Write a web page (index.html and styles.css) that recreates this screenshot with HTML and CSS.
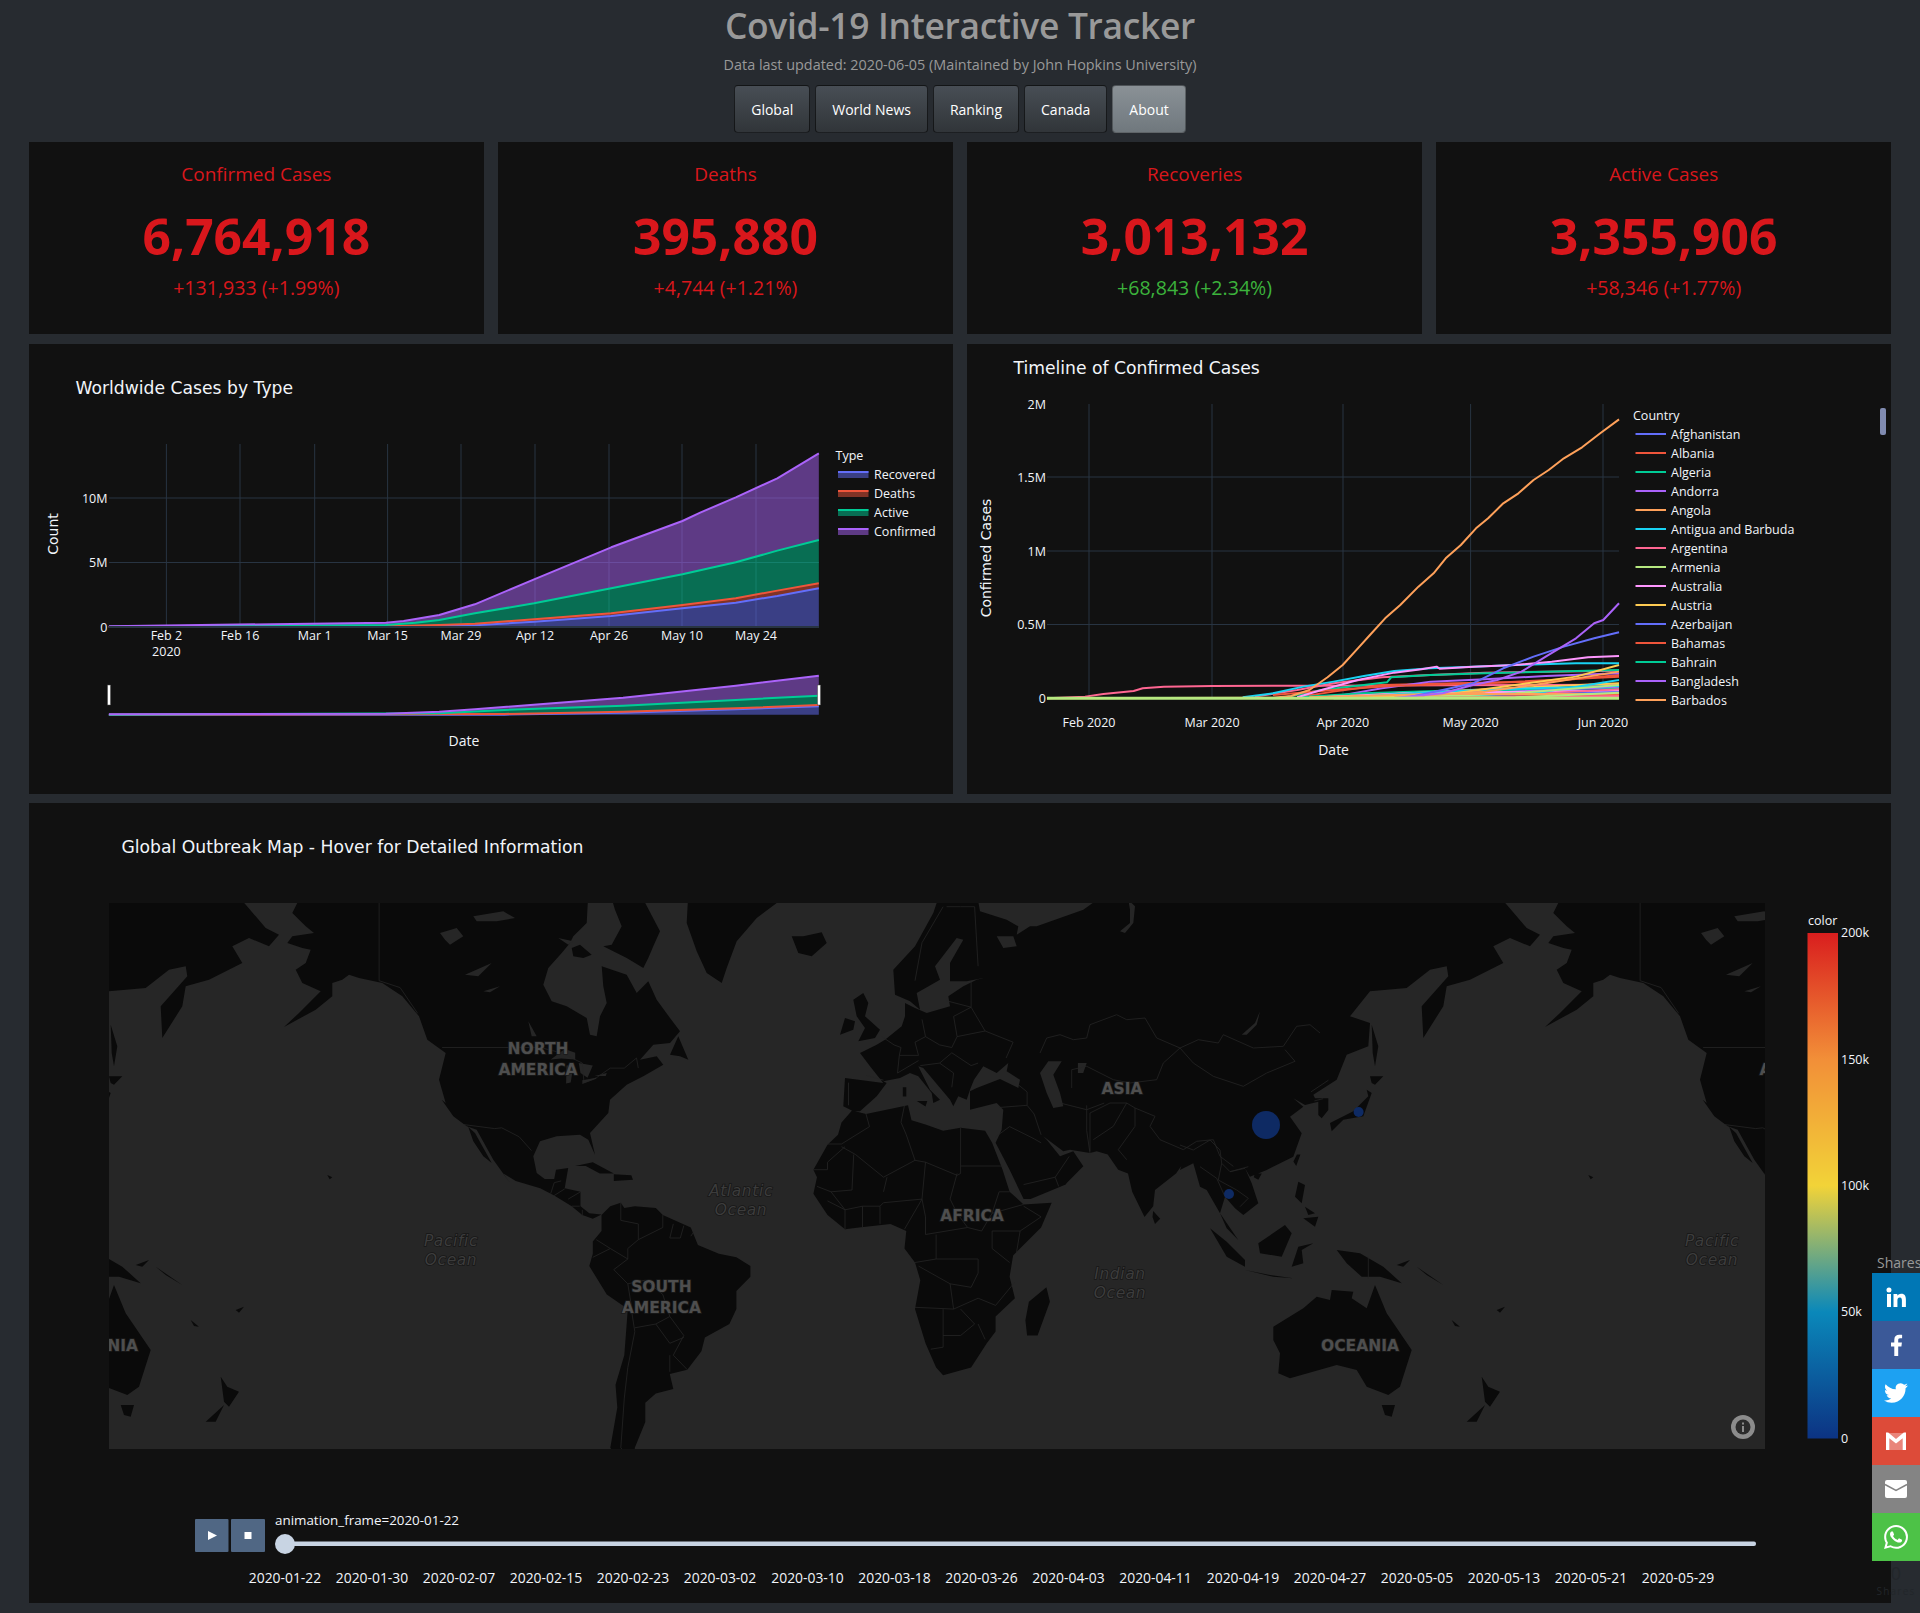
FILE: index.html
```html
<!DOCTYPE html>
<html lang="en">
<head>
<meta charset="utf-8">
<title>Covid-19 Interactive Tracker</title>
<link rel="stylesheet" href="styles.css">
</head>
<body>
<header class="masthead">
  <h1 class="title">Covid-19 Interactive Tracker</h1>
  <p class="updated">Data last updated: 2020-06-05 (Maintained by John Hopkins University)</p>
  <nav class="tabs">
    <a class="tab">Global</a>
    <a class="tab">World News</a>
    <a class="tab">Ranking</a>
    <a class="tab">Canada</a>
    <a class="tab tab-active">About</a>
  </nav>
</header>

<main class="content">
  <section class="cards">
    <article class="card">
      <h2 class="card-label">Confirmed Cases</h2>
      <div class="card-value">6,764,918</div>
      <div class="card-delta">+131,933 (+1.99%)</div>
    </article>
    <article class="card">
      <h2 class="card-label">Deaths</h2>
      <div class="card-value">395,880</div>
      <div class="card-delta">+4,744 (+1.21%)</div>
    </article>
    <article class="card">
      <h2 class="card-label">Recoveries</h2>
      <div class="card-value">3,013,132</div>
      <div class="card-delta delta-good">+68,843 (+2.34%)</div>
    </article>
    <article class="card">
      <h2 class="card-label">Active Cases</h2>
      <div class="card-value">3,355,906</div>
      <div class="card-delta">+58,346 (+1.77%)</div>
    </article>
  </section>

  <section class="charts">
    <div class="panel">
      <svg class="plot" width="924" height="450" viewBox="29 344 924 450">
        <text class="chart-title" x="75.5" y="394">Worldwide Cases by Type</text>
        <g class="grid">
          <path d="M166.4 444V627M240 444V627M314.7 444V627M387.6 444V627M461 444V627M535 444V627M609 444V627M682 444V627M756 444V627"/>
          <path d="M109 498H819M109 562.5H819"/>
        </g>
        <g transform="translate(30 340) scale(.5931 .3333)">
          <path class="band" fill="#636efa" d="M133 860L600 860 690 858 750 856 850 845 980 828 1100 805 1190 788 1260 768 1330 745V860Z"/>
          <path class="band" fill="#ef553b" d="M133 860L600 859 690 855 750 851 850 838 980 820 1100 795 1190 775 1260 752 1330 730V745L1260 768 1190 788 1100 805 980 828 850 845 750 856 690 858 600 860Z"/>
          <path class="band" fill="#00cc96" d="M133 860L600 855 650 848 690 840 750 820 850 790 980 745 1100 703 1190 667 1260 632 1330 600V730L1260 752 1190 775 1100 795 980 820 850 838 750 851 690 855 600 859Z"/>
          <path class="band" fill="#ab63fa" d="M133 859L600 848 630 843 690 825 750 793 850 718 980 622 1100 543 1130 518 1190 472 1260 415 1330 340V600L1260 632 1190 667 1100 703 980 745 850 790 750 820 690 840 650 848 600 855 133 860Z"/>
          <path class="curve" stroke="#636efa" d="M133 860L600 860 690 858 750 856 850 845 980 828 1100 805 1190 788 1260 768 1330 745"/>
          <path class="curve" stroke="#ef553b" d="M133 860L600 859 690 855 750 851 850 838 980 820 1100 795 1190 775 1260 752 1330 730"/>
          <path class="curve" stroke="#00cc96" d="M133 860L600 855 650 848 690 840 750 820 850 790 980 745 1100 703 1190 667 1260 632 1330 600"/>
          <path class="curve" stroke="#ab63fa" d="M133 859L600 848 630 843 690 825 750 793 850 718 980 622 1100 543 1130 518 1190 472 1260 415 1330 340"/>
          <path class="band" fill="#636efa" d="M133 1124L800 1124 1000 1118 1190 1108 1330 1099V1124Z"/>
          <path class="band" fill="#ef553b" d="M133 1124L800 1122 1000 1115 1190 1105 1330 1095V1099L1190 1108 1000 1118 800 1124Z"/>
          <path class="band" fill="#00cc96" d="M133 1124L690 1120 800 1110 1000 1097 1190 1080 1330 1067V1095L1190 1105 1000 1115 800 1122Z"/>
          <path class="band" fill="#ab63fa" d="M133 1123L600 1121 690 1115 750 1108 1000 1073 1190 1037 1330 1007V1067L1190 1080 1000 1097 800 1110 690 1120 133 1124Z"/>
          <path class="curve" stroke="#636efa" d="M133 1124L800 1124 1000 1118 1190 1108 1330 1099"/>
          <path class="curve" stroke="#ef553b" d="M133 1124L800 1122 1000 1115 1190 1105 1330 1095"/>
          <path class="curve" stroke="#00cc96" d="M133 1124L690 1120 800 1110 1000 1097 1190 1080 1330 1067"/>
          <path class="curve" stroke="#ab63fa" d="M133 1123L600 1121 690 1115 750 1108 1000 1073 1190 1037 1330 1007"/>
        </g>
        <path class="zero" d="M109 627H819"/>
        <rect class="handle" x="107.5" y="685" width="3" height="20"/>
        <rect class="handle" x="817.5" y="685" width="3" height="20"/>
        <g class="tick tick-end">
          <text x="107.5" y="503">10M</text>
          <text x="107.5" y="567">5M</text>
          <text x="107.5" y="631.5">0</text>
        </g>
        <g class="tick tick-mid">
          <text x="166.4" y="640">Feb 2</text>
          <text x="166.4" y="656">2020</text>
          <text x="240" y="640">Feb 16</text>
          <text x="314.7" y="640">Mar 1</text>
          <text x="387.6" y="640">Mar 15</text>
          <text x="461" y="640">Mar 29</text>
          <text x="535" y="640">Apr 12</text>
          <text x="609" y="640">Apr 26</text>
          <text x="682" y="640">May 10</text>
          <text x="756" y="640">May 24</text>
        </g>
        <text class="axis-title" transform="translate(57.5 534) rotate(-90)" x="0" y="0">Count</text>
        <text class="axis-title date-title" x="464" y="746">Date</text>
        <g class="tick">
          <text x="835.5" y="460">Type</text>
          <text x="874" y="479">Recovered</text>
          <text x="874" y="498">Deaths</text>
          <text x="874" y="517">Active</text>
          <text x="874" y="536">Confirmed</text>
        </g>
        <g>
          <rect class="swatch-fill" fill="#636efa" x="838" y="471" width="30.5" height="7"/>
          <rect fill="#636efa" x="838" y="471" width="30.5" height="2"/>
          <rect class="swatch-fill" fill="#ef553b" x="838" y="490" width="30.5" height="7"/>
          <rect fill="#ef553b" x="838" y="490" width="30.5" height="2"/>
          <rect class="swatch-fill" fill="#00cc96" x="838" y="509" width="30.5" height="7"/>
          <rect fill="#00cc96" x="838" y="509" width="30.5" height="2"/>
          <rect class="swatch-fill" fill="#ab63fa" x="838" y="528" width="30.5" height="7"/>
          <rect fill="#ab63fa" x="838" y="528" width="30.5" height="2"/>
        </g>
      </svg>
    </div>

    <div class="panel">
      <svg class="plot" width="924" height="450" viewBox="967 344 924 450">
        <text class="chart-title" x="1013.5" y="374">Timeline of Confirmed Cases</text>
        <g class="grid">
          <path d="M1089 404V698M1212 404V698M1343 404V698M1470.6 404V698M1603 404V698"/>
          <path d="M1047 477H1619M1047 551H1619M1047 624.5H1619"/>
        </g>
        <g transform="translate(970 340) scale(.606 .3333)">
          <path class="trace" stroke="#ff6692" d="M127 1075L190 1070 220 1062 270 1053 285 1045 320 1040 400 1038 570 1037 800 1036 1071 1034"/>
          <path class="trace" stroke="#ff6692" d="M470 1070L540 1050 600 1030 680 1012 760 1005 850 998 950 995 1071 992"/>
          <path class="trace" stroke="#00cc96" d="M520 1072L580 1050 650 1035 688 1027 695 1012 760 1005 850 1000 1071 990"/>
          <path class="trace" stroke="#ef553b" d="M540 1072L600 1055 680 1035 800 1030 950 1025 1071 1005"/>
          <path class="trace" stroke="#ab63fa" d="M600 1070L680 1045 760 1025 850 1018 950 1008 1071 1000"/>
          <path class="trace" stroke="#ef553b" d="M500 1065L600 1050 700 1037 850 1030 1071 1010"/>
          <path class="trace" stroke="#00cc96" d="M540 1072L650 1060 780 1052 900 1050 1071 1044"/>
          <path class="trace" stroke="#636efa" d="M560 1074L700 1065 850 1058 1071 1050"/>
          <path class="trace" stroke="#ab63fa" d="M620 1074L760 1064 900 1055 1071 1040"/>
          <path class="trace" stroke="#fecb52" d="M560 1073L700 1062 850 1048 1071 1030"/>
          <path class="trace" stroke="#ff97ff" d="M580 1072L720 1060 880 1056 1071 1052"/>
          <path class="trace" stroke="#19d3f3" d="M610 1073L760 1056 900 1046 1071 1038"/>
          <path class="trace" stroke="#ff6692" d="M650 1074L780 1068 950 1060 1071 1048"/>
          <path class="trace" stroke="#636efa" d="M740 1074L900 1066 1071 1056"/>
          <path class="trace" stroke="#19d3f3" d="M800 1070L950 1055 1071 1020"/>
          <path class="trace" stroke="#b6e880" d="M750 1070L900 1060 1071 1035"/>
          <path class="trace" stroke="#fecb52" d="M640 1073L800 1060 920 1030 1000 1010 1071 975"/>
          <path class="trace" stroke="#ffa15a" d="M700 1072L850 1055 950 1030 1071 995"/>
          <path class="trace" stroke="#ffa15a" d="M560 1072L760 1062 1071 1062"/>
          <path class="trace" stroke="#19d3f3" d="M450 1072L500 1060 550 1040 600 1025 650 1008 700 993 760 985 830 980 900 975 1000 970 1071 970"/>
          <path class="trace" stroke="#ff97ff" d="M540 1072L580 1050 640 1020 700 998 745 988 770 980 775 986 830 980 900 975 960 965 1020 952 1071 948"/>
          <path class="trace" stroke="#636efa" d="M720 1073L780 1050 830 1030 880 985 930 950 980 920 1030 895 1071 877"/>
          <path class="trace" stroke="#ab63fa" d="M700 1074L780 1060 830 1035 870 1020 910 995 950 950 1000 895 1030 850 1045 840 1071 790"/>
          <path class="trace" stroke="#ffa15a" d="M127 1075L500 1073 530 1068 560 1050 590 1012 615 975 640 925 660 885 685 835 710 795 740 740 765 700 785 655 810 615 835 565 855 535 880 490 905 460 930 420 955 390 980 355 1010 322 1040 280 1071 238"/>
          <path class="trace" stroke="#ef553b" d="M760 1074L900 1069 1071 1066"/>
          <path class="trace" stroke="#ff6692" d="M700 1074L900 1072 1071 1068"/>
          <path class="trace-band" stroke="#b6e880" d="M127 1075L1071 1075"/>
          <path class="trace" stroke="#b6e880" d="M600 1075L900 1072 1071 1058"/>
        </g>
        <g class="tick tick-end">
          <text x="1046" y="409">2M</text>
          <text x="1046" y="482">1.5M</text>
          <text x="1046" y="556">1M</text>
          <text x="1046" y="629">0.5M</text>
          <text x="1046" y="703">0</text>
        </g>
        <g class="tick tick-mid">
          <text x="1089" y="727">Feb 2020</text>
          <text x="1212" y="727">Mar 2020</text>
          <text x="1343" y="727">Apr 2020</text>
          <text x="1470.6" y="727">May 2020</text>
          <text x="1603" y="727">Jun 2020</text>
        </g>
        <text class="axis-title" transform="translate(991 558) rotate(-90)" x="0" y="0">Confirmed Cases</text>
        <text class="axis-title date-title" x="1333.6" y="755">Date</text>
        <g class="legend-lines">
          <path stroke="#636efa" d="M1635.5 434H1666"/>
          <path stroke="#ef553b" d="M1635.5 453H1666"/>
          <path stroke="#00cc96" d="M1635.5 472H1666"/>
          <path stroke="#ab63fa" d="M1635.5 491H1666"/>
          <path stroke="#ffa15a" d="M1635.5 510H1666"/>
          <path stroke="#19d3f3" d="M1635.5 529H1666"/>
          <path stroke="#ff6692" d="M1635.5 548H1666"/>
          <path stroke="#b6e880" d="M1635.5 567H1666"/>
          <path stroke="#ff97ff" d="M1635.5 586H1666"/>
          <path stroke="#fecb52" d="M1635.5 605H1666"/>
          <path stroke="#636efa" d="M1635.5 624H1666"/>
          <path stroke="#ef553b" d="M1635.5 643H1666"/>
          <path stroke="#00cc96" d="M1635.5 662H1666"/>
          <path stroke="#ab63fa" d="M1635.5 681H1666"/>
          <path stroke="#ffa15a" d="M1635.5 700H1666"/>
        </g>
        <g class="tick">
          <text x="1633" y="420">Country</text>
          <text x="1671" y="439">Afghanistan</text>
          <text x="1671" y="458">Albania</text>
          <text x="1671" y="477">Algeria</text>
          <text x="1671" y="496">Andorra</text>
          <text x="1671" y="515">Angola</text>
          <text x="1671" y="534">Antigua and Barbuda</text>
          <text x="1671" y="553">Argentina</text>
          <text x="1671" y="572">Armenia</text>
          <text x="1671" y="591">Australia</text>
          <text x="1671" y="610">Austria</text>
          <text x="1671" y="629">Azerbaijan</text>
          <text x="1671" y="648">Bahamas</text>
          <text x="1671" y="667">Bahrain</text>
          <text x="1671" y="686">Bangladesh</text>
          <text x="1671" y="705">Barbados</text>
        </g>
        <rect class="legend-scroll" x="1880" y="408" width="6" height="27" rx="2"/>
      </svg>
    </div>
  </section>

  <section class="panel">
    <svg class="plot" width="1862" height="800" viewBox="29 803 1862 800">
      <defs>
        <clipPath id="map-frame"><rect x="109" y="903" width="1656" height="546"/></clipPath>
        <linearGradient id="portland" x1="0" y1="1" x2="0" y2="0">
          <stop offset="0" stop-color="#0c3383"/>
          <stop offset=".25" stop-color="#0a88ba"/>
          <stop offset=".5" stop-color="#f2d338"/>
          <stop offset=".75" stop-color="#f28f38"/>
          <stop offset="1" stop-color="#d91e1e"/>
        </linearGradient>
      </defs>
      <text class="chart-title" x="121.5" y="852.5">Global Outbreak Map - Hover for Detailed Information</text>
      <rect class="ocean" x="109" y="903" width="1656" height="546"/>
      <g clip-path="url(#map-frame)">
        <g id="world">
          <path id="land" class="land"/>
          <path id="lakes" class="ocean"/>
          <path id="borders" class="borders"/>
          <g class="place">
            <text x="538" y="1054">NORTH</text>
            <text x="538" y="1075">AMERICA</text>
            <text x="661.4" y="1292">SOUTH</text>
            <text x="661.4" y="1313">AMERICA</text>
            <text x="972" y="1221">AFRICA</text>
            <text x="1122" y="1094">ASIA</text>
            <text x="1360" y="1351">OCEANIA</text>
          </g>
          <g class="place sea">
            <text x="741" y="1196">Atlantic</text>
            <text x="741" y="1214.5">Ocean</text>
            <text x="451" y="1246">Pacific</text>
            <text x="451" y="1264.5">Ocean</text>
            <text x="1120" y="1279">Indian</text>
            <text x="1120" y="1297.5">Ocean</text>
          </g>
        </g>
        <use href="#world" x="-1261"/>
        <use href="#world" x="1261"/>
        <circle class="bubble" cx="1266" cy="1125" r="14"/>
        <circle class="bubble" cx="1358.6" cy="1112" r="5"/>
        <circle class="bubble" cx="1229" cy="1194" r="5"/>
      </g>
      <circle class="info-disc" cx="1743" cy="1427" r="12"/>
      <circle class="info-ring" cx="1743" cy="1427" r="7.5"/>
      <rect class="info-mark" x="1742" y="1426" width="2" height="6"/>
      <rect class="info-mark" x="1742" y="1422.5" width="2" height="2"/>

      <rect x="1807.5" y="933" width="30.5" height="505.5" fill="url(#portland)"/>
      <g class="tick">
        <text x="1808" y="925">color</text>
        <text x="1841" y="937">200k</text>
        <text x="1841" y="1063.5">150k</text>
        <text x="1841" y="1190">100k</text>
        <text x="1841" y="1316">50k</text>
        <text x="1841" y="1443">0</text>
      </g>

      <rect class="player" x="195" y="1519" width="33.5" height="33" rx="1"/>
      <rect class="player" x="231" y="1519" width="34" height="33" rx="1"/>
      <path class="player-glyph" d="M208 1531l9 4.5-9 4.5z"/>
      <rect class="player-glyph" x="244.5" y="1532" width="7" height="7"/>
      <text class="slider-label" x="275" y="1525">animation_frame=2020-01-22</text>
      <rect class="rail" x="285" y="1541.5" width="1471" height="4.5" rx="2"/>
      <circle class="grip" cx="285" cy="1544" r="10"/>
      <g class="slider-tick">
        <text x="285" y="1582.5">2020-01-22</text>
        <text x="372" y="1582.5">2020-01-30</text>
        <text x="459" y="1582.5">2020-02-07</text>
        <text x="546" y="1582.5">2020-02-15</text>
        <text x="633" y="1582.5">2020-02-23</text>
        <text x="720" y="1582.5">2020-03-02</text>
        <text x="807.5" y="1582.5">2020-03-10</text>
        <text x="894.5" y="1582.5">2020-03-18</text>
        <text x="981.5" y="1582.5">2020-03-26</text>
        <text x="1068.5" y="1582.5">2020-04-03</text>
        <text x="1155.5" y="1582.5">2020-04-11</text>
        <text x="1243" y="1582.5">2020-04-19</text>
        <text x="1330" y="1582.5">2020-04-27</text>
        <text x="1417" y="1582.5">2020-05-05</text>
        <text x="1504" y="1582.5">2020-05-13</text>
        <text x="1591" y="1582.5">2020-05-21</text>
        <text x="1678" y="1582.5">2020-05-29</text>
      </g>
    </svg>
  </section>
</main>

<aside class="share">
  <div class="share-label">Shares</div>
  <a class="share-btn share-linkedin">
    <svg class="share-icon" viewBox="0 0 24 24"><path d="M4.98 2.5a2.5 2.5 0 1 1 0 5 2.5 2.5 0 0 1 0-5zM3 9h4v13H3zM9.5 9h3.8v1.8h.05c.53-1 1.83-2.1 3.77-2.1 4.03 0 4.78 2.65 4.78 6.1V22h-4v-6.2c0-1.5-.02-3.4-2.08-3.4-2.08 0-2.4 1.62-2.4 3.3V22H9.5z"/></svg>
  </a>
  <a class="share-btn share-facebook">
    <svg class="share-icon" viewBox="0 0 24 24"><path d="M14.2 23v-9.6h3.2l.5-3.8h-3.7V7.2c0-1.1.3-1.9 1.9-1.9h2V1.9c-.4 0-1.5-.1-2.9-.1-2.9 0-4.9 1.8-4.9 5v2.8H7v3.8h3.3V23z"/></svg>
  </a>
  <a class="share-btn share-twitter">
    <svg class="share-icon" viewBox="0 0 24 24"><path d="M23.95 4.57a10 10 0 0 1-2.82.77 4.96 4.96 0 0 0 2.16-2.72c-.95.55-2 .95-3.12 1.18a4.92 4.92 0 0 0-8.38 4.48C7.69 8.09 4.07 6.13 1.64 3.16a4.82 4.82 0 0 0-.67 2.48c0 1.71.87 3.21 2.19 4.1a4.9 4.9 0 0 1-2.23-.62v.06a4.92 4.92 0 0 0 3.95 4.83 4.9 4.9 0 0 1-2.21.08 4.94 4.94 0 0 0 4.6 3.42A9.87 9.87 0 0 1 0 19.54a14 14 0 0 0 7.56 2.21c9.05 0 14-7.5 14-13.98 0-.21 0-.42-.02-.63a9.94 9.94 0 0 0 2.41-2.57z"/></svg>
  </a>
  <a class="share-btn share-gmail">
    <svg class="share-icon" viewBox="0 0 24 24"><path class="gmail-fill" d="M2 4h20v17H2z"/><path d="M2 3.5h2.2L12 10l7.8-6.500H22V21h-3.300V9.200L12 14.500 5.300 9.200V21H2z"/></svg>
  </a>
  <a class="share-btn share-mail">
    <svg class="share-icon" viewBox="0 0 24 24"><rect x="1" y="3" width="22" height="18" rx="2"/><path class="mail-fold" d="M1 7.500l11 6 11-6"/></svg>
  </a>
  <a class="share-btn share-whatsapp">
    <svg class="share-icon" viewBox="0 0 24 24"><path d="M17.472 14.382c-.297-.149-1.758-.867-2.03-.967-.273-.099-.471-.148-.67.15-.197.297-.767.966-.94 1.164-.173.199-.347.223-.644.075-.297-.15-1.255-.463-2.39-1.475-.883-.788-1.48-1.761-1.653-2.059-.173-.297-.018-.458.13-.606.134-.133.298-.347.446-.52.149-.174.198-.298.298-.497.099-.198.05-.371-.025-.52-.075-.149-.669-1.612-.916-2.207-.242-.579-.487-.5-.669-.51-.173-.008-.371-.01-.57-.01-.198 0-.52.074-.792.372-.272.297-1.04 1.016-1.04 2.479 0 1.462 1.065 2.875 1.213 3.074.149.198 2.096 3.2 5.077 4.487.709.306 1.262.489 1.694.625.712.227 1.36.195 1.871.118.571-.085 1.758-.719 2.006-1.413.248-.694.248-1.289.173-1.413-.074-.124-.272-.198-.57-.347m-5.421 7.403h-.004a9.87 9.87 0 01-5.031-1.378l-.361-.214-3.741.982.998-3.648-.235-.374a9.86 9.86 0 01-1.51-5.26c.001-5.45 4.436-9.884 9.888-9.884 2.64 0 5.122 1.03 6.988 2.898a9.825 9.825 0 012.893 6.994c-.003 5.45-4.437 9.884-9.885 9.884m8.413-18.297A11.815 11.815 0 0012.05 0C5.495 0 .16 5.335.157 11.892c0 2.096.547 4.142 1.588 5.945L.057 24l6.305-1.654a11.882 11.882 0 005.683 1.448h.005c6.554 0 11.89-5.335 11.893-11.893a11.821 11.821 0 00-3.48-8.413z"/></svg>
  </a>
  <div class="share-count">0</div>
  <div class="share-count-label">Shares</div>
</aside>
<script src="map.js"></script>
</body>
</html>
```
FILE: styles.css
```css
* { box-sizing: border-box; }
html, body { margin: 0; height: 1613px; overflow: hidden; }
body {
  background: #272b30;
  font-family: "Open Sans", "Liberation Sans", sans-serif;
  position: relative;
}

.masthead { display: flex; flex-direction: column; align-items: center; height: 142px; }
.title { margin: 3px 0 0; font-size: 35.4px; line-height: 44px; font-weight: 600; color: #999; letter-spacing: -0.3px; }
.updated { margin: 7.5px 0 0; font-size: 14.4px; line-height: 20px; color: #999; }
.tabs { display: flex; gap: 5px; margin-top: 10.5px; }
.tab {
  display: flex; align-items: center; justify-content: center;
  height: 48px; padding: 0 16px;
  font-size: 14px; color: #fff;
  background: linear-gradient(#484e55, #3a3f44 60%, #313539);
  border: 1px solid rgba(0, 0, 0, .6);
  border-radius: 4px;
}
.tab-active { background: linear-gradient(#8a9196, #7a8288 60%, #70787d); border-color: rgba(0, 0, 0, .3); }

.content { padding: 0 29px; display: flex; flex-direction: column; gap: 9px; }
.cards { display: grid; grid-template-columns: repeat(4, 1fr); gap: 14.5px; height: 192px; margin-bottom: 1px; }
.card { background: #111; display: flex; flex-direction: column; align-items: center; color: #d9171c; }
.card-label { margin: 19px 0 0; font-size: 19px; line-height: 26px; font-weight: 400; }
.card-value { margin-top: 16px; font-size: 49.8px; line-height: 66px; font-weight: 700; }
.card-delta { margin-top: 6px; font-size: 19.6px; line-height: 26px; }
.delta-good { color: #3cb33c; }

.charts { display: grid; grid-template-columns: 924px 924px; gap: 14px; }
.panel { background: #111; }
.plot { display: block; }

.chart-title { font: 17.2px "DejaVu Sans", Verdana, sans-serif; fill: #f2f5fa; }
.axis-title { font: 14px "DejaVu Sans", Verdana, sans-serif; fill: #f2f5fa; text-anchor: middle; }
.date-title { font-family: "Open Sans", sans-serif; font-weight: 500; }
.tick { font: 500 12.5px "Open Sans", sans-serif; fill: #f2f5fa; }
.tick-end { text-anchor: end; }
.tick-mid { text-anchor: middle; }
.slider-label { font: 500 13.4px "Open Sans", sans-serif; fill: #f2f5fa; }
.slider-tick { font: 500 13.9px "Open Sans", sans-serif; fill: #f2f5fa; text-anchor: middle; }

.grid path { fill: none; stroke: #283442; stroke-width: 1; }
.zero { fill: none; stroke: #283442; stroke-width: 2; }
.band { fill-opacity: .5; }
.curve { fill: none; stroke-width: 2; vector-effect: non-scaling-stroke; stroke-linejoin: round; }
.trace { fill: none; stroke-width: 2; vector-effect: non-scaling-stroke; stroke-linejoin: round; }
.trace-band { fill: none; stroke-width: 3; vector-effect: non-scaling-stroke; }
.handle { fill: #fff; stroke: #444; stroke-width: .5; }
.swatch-fill { fill-opacity: .5; }
.legend-lines path { fill: none; stroke-width: 2; }
.legend-scroll { fill: #808bb0; }

.ocean { fill: #262626; }
.land { fill: #0a0a0a; }
.borders { fill: none; stroke: #242424; stroke-width: .8; }
.place {
  font: 700 15.5px "DejaVu Sans", sans-serif;
  fill: #4e4e4e;
  text-anchor: middle;
  paint-order: stroke;
  stroke: #1a1a1a;
  stroke-width: 1.5px;
}
.sea { font-weight: 400; font-style: italic; font-size: 15.5px; letter-spacing: .6px; fill: #3c3c3c; stroke: #161616; }
.bubble { fill: #0e2a63; }
.info-disc { fill: #8c8c8c; }
.info-ring { fill: #2b2b2b; }
.info-mark { fill: #8c8c8c; }

.player { fill: #506784; }
.player-glyph { fill: #fff; }
.rail { fill: #c8d4e3; }
.grip { fill: #c8d4e3; }

.share { position: absolute; right: 0; top: 1250px; width: 48px; }
.share-label { font-size: 14px; line-height: 23px; color: #999; white-space: nowrap; padding-left: 5px; padding-top: 1px; height: 23px; }
.share-btn { display: flex; align-items: center; justify-content: center; height: 48px; }
.share-icon { width: 24px; height: 24px; fill: #fff; }
.share-linkedin { background: #0077b5; }
.share-facebook { background: #3b5998; }
.share-twitter { background: #1da1f2; }
.share-gmail { background: #dd4b39; }
.share-mail { background: #848484; }
.share-whatsapp { background: #4dc247; }
.gmail-fill { fill: #e9857b; }
.mail-fold { fill: none; stroke: #848484; stroke-width: 1.5; }
.share-count { margin-top: 1px; font-size: 18px; line-height: 22px; text-align: center; color: #22262a; }
.share-count-label { font-size: 10px; letter-spacing: 1.2px; line-height: 14px; text-align: center; color: #22262a; }
```
FILE: map.js
```js
// Land, water and border outlines of the reference map. Some shapes are given
// as longitude/latitude (Web Mercator, 3.503 px per degree), others were traced
// directly from regions of the reference in 3x crop coordinates.
function L(points) {
  return points.map(function (p) {
    var m = Math.log(Math.tan(Math.PI / 4 + p[1] * Math.PI / 360));
    return [873 + 3.503 * p[0], 1245 - 200.7 * m];
  });
}
function C(x0, y0, points) {
  return points.map(function (p) { return [x0 + p[0] / 3, y0 + p[1] / 3]; });
}
var AM = [440, 903];   // North America and the Atlantic
var EU = [820, 903];   // Europe and western Asia
var FE = [1300, 903];  // Far East
var AK = [39, 903];    // Alaska and the Pacific coast of Canada
var SE = [1180, 1100]; // South-East Asia and Oceania
function A(o, pts) { return C(o[0], o[1], pts); }

var NORTH_AMERICA = [].concat(
  A(AM, [[445,-30],[440,60],[400,100],[390,120],[365,150],[325,195],[310,245],[335,295],[380,310],[440,345],[450,395],[470,400],[480,340],[500,300],[490,250],[485,190],[560,215],[590,270],[625,235],[650,290],[690,345],[720,385],[690,420],[640,425],[600,470],[650,460],[670,485],[610,520],[560,545],[510,590],[505,630],[450,690],[465,755],[445,710],[420,695],[350,700],[300,715],[280,760],[290,810],[330,840]]),
  L([[-95,18.5],[-91,18.5],[-90.5,21],[-87,21.5],[-88,16],[-83.5,15],[-83.5,11],[-81,9],[-77.5,8.7],[-80,7.5],[-83,8.5],[-86,11],[-91,14],[-95,16],[-102,18],[-105.5,20]]),
  A(AM, [[210,840],[160,770],[110,680],[80,670],[40,640],[5,590]]),
  A(AK, [[1220,600],[1200,530],[1220,450],[1165,410],[1140,340],[1090,280],[1030,240],[960,225],[930,215],[910,230],[880,240],[880,280],[830,320],[735,372],[780,330],[845,265],[790,240],[770,200],[800,180],[815,140],[790,135],[745,120],[760,100],[825,90],[800,70],[760,30],[790,-30]])
);

var EURASIA = [].concat(
  A(EU, [[100,625],[70,610],[75,525],[190,540],[150,490],[120,450],[170,425],[195,410],[245,370],[255,340],[255,300],[285,315],[320,330],[390,310],[385,280],[430,250],[470,230],[490,225],[440,235],[390,235],[390,180],[430,110],[410,105],[345,190],[360,230],[290,270],[300,320],[270,295],[225,275],[220,200],[285,130],[340,30],[360,-30],[470,-30],[480,25],[560,50],[595,70],[590,95],[630,70],[650,70],[790,20],[860,-30]]),
  A(FE, [[590,-30],[680,75],[720,95],[690,130],[630,105],[580,130],[610,180],[510,230],[440,250],[430,310],[370,405],[365,310],[445,220],[440,190],[390,200],[320,255],[210,265],[150,340],[210,360],[205,430],[140,455],[110,530],[40,575]]),
  A(SE, [[405,-5],[445,-5],[445,30],[425,55],[415,45],[415,5],[375,15],[340,-5],[370,20],[330,50],[365,100],[340,170],[260,210],[210,230],[195,205],[215,250],[235,310],[190,345],[165,325],[135,290],[120,340],[175,420],[140,385],[120,340],[80,270],[60,260],[40,190],[0,210]]),
  L([[88,22],[86.5,20],[80.5,15.5],[80,11],[77.5,8],[74,15],[72.8,20],[70,21],[67,25]]),
  A(EU, [[830,745],[810,750],[750,740],[730,745],[670,700],[680,710],[720,760],[760,745],[790,790],[740,840]]),
  L([[55,17],[45,13],[43,13],[39,21],[35,28]]),
  A(EU, [[545,680],[550,620],[530,600],[450,620],[450,565],[470,555],[540,528],[595,555],[600,530],[560,505],[565,480],[530,510],[490,490],[462,530],[450,560],[440,590],[415,580],[400,610],[390,590],[310,495],[295,490],[330,560],[360,590],[340,600],[335,570],[295,520],[270,510],[240,525],[190,535],[200,540],[170,580],[120,625]])
);

var LAND = [
  NORTH_AMERICA,
  EURASIA,
  A(AM, [[85,672],[105,690],[155,780],[130,760],[100,715]]),
  A(AM, [[490,130],[515,125],[545,70],[525,20],[510,-30],[600,-30],[660,85],[640,130],[625,165],[610,195],[560,165]]),
  A(AM, [[395,135],[420,125],[455,155],[430,165],[400,160]]),
  A(AM, [[745,-30],[740,60],[770,145],[800,210],[845,240],[860,195],[890,115],[950,45],[1050,-30]]),
  A(AM, [[1055,100],[1090,100],[1145,88],[1160,120],[1115,160],[1075,150]]),
  A(AM, [[690,455],[715,400],[745,470],[720,460]]),
  L([[-85,22],[-80,23],[-74,20],[-78,20],[-82,22]]),
  L([[-74,19.8],[-69,19.5],[-68.5,18.3],[-74,18]]),
  L([[-77.5,8.5],[-75,11],[-72,12],[-71,10.5],[-68,11],[-62,10.5],[-60,8.5],[-52,5],[-50,0],[-44,-2.5],[-39,-3.5],[-35,-6],[-35,-9],[-39,-13],[-39,-18],[-41,-22],[-48,-25.5],[-49,-29],[-53,-33.5],[-58,-34.5],[-57,-38],[-62,-39],[-65,-41],[-65,-45],[-68,-50],[-68,-53],[-72,-53],[-75,-50],[-73,-42],[-73.5,-37],[-71,-30],[-70,-18],[-76,-14],[-81,-6],[-80,-2.5],[-80,1],[-77.5,4]]),
  L([[-6,35.8],[-2,35],[10,37],[11,33.5],[15,32.5],[20,31],[25,31.7],[32,31],[34,28],[37,21],[39,15],[43,11.5],[51,12],[48,5],[40,-3],[39,-9],[40.5,-15],[35,-20],[35,-24],[32.5,-27],[28,-33],[20,-34.8],[18,-33],[15,-27],[12,-18],[13.5,-10],[12,-5],[9,-1],[9.5,4],[5,6],[-4,5],[-8,4.5],[-13,8.5],[-17,14.5],[-16,19],[-17,21],[-13,27.5],[-10,30],[-9,33]]),
  L([[49.5,-12],[50.5,-16],[47,-25],[44,-25],[43.5,-21],[44.5,-16]]),
  A(EU, [[100,290],[130,270],[145,300],[135,340],[180,380],[165,405],[115,415],[135,375],[110,340]]),
  A(EU, [[60,395],[75,345],[105,355],[100,380]]),
  L([[8.5,41],[9.5,41],[9.5,39],[8.5,39]]),
  L([[12.5,38],[15.5,38],[15,36.7]]),
  A(FE, [[200,560],[215,570],[190,640],[130,650],[95,685],[90,660],[160,625],[205,580]]),
  A(FE, [[210,520],[250,520],[225,545],[215,540]]),
  A(FE, [[215,365],[235,430],[225,490],[218,450]]),
  L([[121,25],[122,25],[120.8,22],[120,23.2]]),
  L([[109,20],[111,20],[110,18.3],[108.7,19]]),
  L([[80,9.7],[82,7.5],[80.5,6],[79.8,8]]),
  A(SE, [[355,245],[375,255],[365,310],[345,290]]),
  A(SE, [[370,355],[415,350],[405,380]]),
  A(SE, [[375,320],[405,340],[385,345]]),
  A(SE, [[90,385],[140,425],[195,480],[195,500],[140,470]]),
  A(SE, [[195,510],[280,530],[340,535],[270,525]]),
  A(SE, [[235,430],[315,375],[335,400],[305,470],[240,460]]),
  A(SE, [[335,500],[355,440],[400,430],[365,450],[370,490]]),
  A(SE, [[470,450],[540,460],[610,500],[665,550],[600,530],[545,530],[500,490]]),
  A(SE, [[650,495],[690,480],[670,500]]),
  A(SE, [[710,500],[790,555],[740,525]]),
  A(SE, [[815,660],[840,680],[825,678]]),
  A(SE, [[950,630],[975,620],[960,638]]),
  A(SE, [[1225,225],[1240,232],[1232,238]]),
  A(SE, [[280,680],[370,625],[410,590],[450,600],[455,570],[520,575],[515,595],[560,625],[585,555],[620,640],[695,750],[660,860],[625,885],[560,860],[530,810],[470,795],[330,835],[295,820],[300,760],[280,720]]),
  A(SE, [[605,915],[645,915],[635,950],[615,945]]),
  A(SE, [[905,830],[925,860],[960,875],[930,920],[915,905]]),
  A(SE, [[915,915],[860,965],[890,965]])
];

var WATER = [
  L([[-92,46.7],[-88,48.7],[-85,48],[-85,46.7],[-89,46.9]]),
  L([[-87.6,41.8],[-86.3,42],[-85.5,45.5],[-87.5,45.5]]),
  L([[-84,46],[-80,45.5],[-81.5,43],[-83.5,44]]),
  L([[-83,41.7],[-79,42.8],[-79,43],[-83,42.5]]),
  L([[-79.5,43.4],[-76,44],[-76.3,43.4]]),
  A(AM, [[0,90],[50,75],[70,100],[30,125],[15,110]]),
  A(AM, [[75,215],[155,180],[115,220]]),
  A(AM, [[130,265],[180,250],[150,268]]),
  A(AM, [[265,355],[290,400],[275,400]]),
  A(AM, [[100,40],[190,25],[225,45],[170,55],[110,55]]),
  A(AM, [[355,105],[400,115],[385,125]]),
  A(EU, [[660,510],[685,475],[725,475],[700,515],[720,570],[730,610],[700,615],[680,570]]),
  A(EU, [[530,100],[580,100],[590,130],[550,135]]),
  A(EU, [[925,-10],[945,10],[940,60],[915,90],[900,85],[930,60],[930,20]]),
  A(EU, [[1265,395],[1305,360],[1320,325],[1310,365],[1280,395]]),
  L([[58.5,46],[61,46],[60,44],[58.5,44]])
];

var BORDERS = [
  L([[-123,49],[-95,49],[-89,48],[-83,46],[-82.5,42],[-79,43],[-75,45],[-71,45],[-67.5,47],[-67,45]]),
  L([[-141,69.6],[-141,60],[-135,59],[-130,55]]),
  L([[-117,32.5],[-108,31.5],[-106,31.7],[-101,29.5],[-97.5,26]]),
  L([[-92,14.5],[-91,17.5],[-89,18]]),L([[-88,15.8],[-91,14]]),L([[-83.5,15],[-87,13]]),L([[-83.7,11],[-86,11]]),L([[-83,8.5],[-83,10]]),
  L([[-72,12],[-72,7],[-67,6],[-67,1.5],[-70,-1],[-70,-4],[-74,-7],[-70,-11],[-69,-17],[-70,-18]]),
  L([[-67,1.5],[-60,5],[-60,8.5]]),L([[-57,6],[-58,2],[-55,2],[-54,5.5]]),L([[-52,2.5],[-51,4]]),
  L([[-70,-11],[-65,-10],[-60,-14],[-58,-20],[-54,-25],[-57,-30],[-53,-33.5]]),
  L([[-69,-18],[-68,-24],[-70,-33],[-71,-40],[-72,-50],[-69,-52]]),
  L([[-68,-23],[-62,-22],[-58,-20]]),L([[-62,-22],[-58,-27],[-54,-25.5]]),L([[-58,-30],[-58,-34]]),
  L([[-80,-3.5],[-75,-1],[-70,-4]]),L([[-79,1.5],[-75,-1]]),
  L([[-2,35],[-1,32],[-9,27.7],[-13,27.7]]),L([[-9,27],[-5,25],[3,19],[12,23.5],[9.5,30],[8,33],[9,37]]),
  L([[25,31.7],[25,20]]),L([[25,20],[24,19.5],[15,23],[12,23.5]]),L([[25,22],[37,22]]),L([[24,20],[22,13],[24,9]]),
  L([[-17,21],[-13,21],[-13,23],[-8,27]]),L([[-16,16.5],[-12,15],[-6,15.5],[-5.5,25]]),L([[3,15],[4,19]]),L([[3,12],[14,13],[15,23]]),
  L([[14,13],[15,8]]),L([[9,4.5],[14,13]]),L([[15,8],[15,3],[27,5],[31,4],[34,9],[36,15],[39,15]]),L([[24,9],[27,5]]),
  L([[34,9],[43,11.5]]),L([[42,4],[48,8],[43,11]]),L([[34,4],[42,4],[41,-2]]),L([[34,4],[34,-1],[39,-5]]),
  L([[12,-5],[18,-4],[30,-4],[30,-8],[28,-12],[22,-11],[13,-6]]),L([[18,-4],[18,3]]),L([[12,-17.5],[23,-18],[22,-11]]),
  L([[20,-18],[20,-28],[16.5,-28.5]]),L([[25,-18],[29,-22],[25,-25],[20,-25]]),L([[30,-15],[35,-17],[40.5,-10.5]]),L([[30,-22],[32,-26]]),L([[23,-18],[30,-15]]),
  L([[-13,12.5],[-8,10],[-8,4.5]]),L([[-3,5],[-3,11],[2,11],[2,6]]),L([[-12,15],[-8,10],[-3,11]]),L([[3,12],[2,11]]),
  L([[-2,43.5],[3,42.5]]),L([[-7,42],[-7,37]]),L([[2.5,51],[6,49.5],[8,49],[7.5,47.5],[7,44]]),L([[14,54],[15,51],[12,50],[13,47.5],[7.5,47.5]]),
  L([[23,54.5],[24,51],[22.5,49],[19,49.5],[15,51]]),L([[24,51],[32,52],[40,50],[38,47]]),L([[28,60],[28,56],[32,52]]),L([[21,57],[28,56]]),L([[23,54.5],[28,56]]),
  L([[30,62],[29,69],[25,69],[21,69]]),L([[12,60],[14,65],[20,69]]),L([[7,44],[13,46.5]]),L([[13.5,45.5],[19,46],[22.5,48],[28,45.5]]),L([[19,46],[23,44],[22.5,41]]),L([[28,45.5],[30,46]]),
  L([[36,36.5],[44,37],[44,40],[41.5,41.5]]),L([[44,37],[46,35],[48,30]]),L([[35,29.5],[39,32],[46,29],[48,28]]),L([[43,17],[52,19],[53,16.5]]),L([[52,19],[56,24.5]]),
  L([[61,37],[61,31],[62,25]]),L([[53.5,37.5],[61,36],[66,37.5]]),
  A(EU, [[660,450],[680,405],[720,395],[760,410],[800,405],[810,365],[890,335],[920,350],[975,345],[1010,405],[1080,435],[1030,480],[1010,530],[930,540],[880,530],[800,490],[755,500],[755,555]]),
  A(EU, [[1080,435],[1135,410],[1195,420],[1210,395],[1300,435],[1390,430],[1430,370],[1470,365],[1500,390]]),
  A(EU, [[1395,440],[1425,475],[1340,510],[1270,550],[1180,520],[1120,480],[1080,435]]),
  A(EU, [[810,745],[810,630],[870,600],[920,600],[880,670],[820,710]]),
  A(EU, [[945,615],[1005,640],[990,670],[1020,710],[1090,740],[1130,715],[1180,710],[1200,760],[1240,790]]),
  A(EU, [[920,600],[945,615],[945,670],[895,740],[920,770]]),
  A(SE, [[0,135],[40,150],[90,120],[120,150],[125,190],[150,215],[195,205]]),
  A(SE, [[60,200],[110,235],[135,290]]),
  A(SE, [[125,190],[115,240],[170,270],[205,295],[180,320]]),
  A(SE, [[150,215],[205,200]]),
  A(SE, [[565,470],[565,535]]),
  L([[125,40],[130,42.5]]),L([[126,38],[128.5,38.5]])
];

function toPath(shapes, closed) {
  return shapes.map(function (s) {
    return 'M' + s.map(function (p) { return p[0].toFixed(1) + ' ' + p[1].toFixed(1); }).join('L') + (closed ? 'Z' : '');
  }).join('');
}
document.getElementById('land').setAttribute('d', toPath(LAND, true));
document.getElementById('lakes').setAttribute('d', toPath(WATER, true));
document.getElementById('borders').setAttribute('d', toPath(BORDERS, false));
```
